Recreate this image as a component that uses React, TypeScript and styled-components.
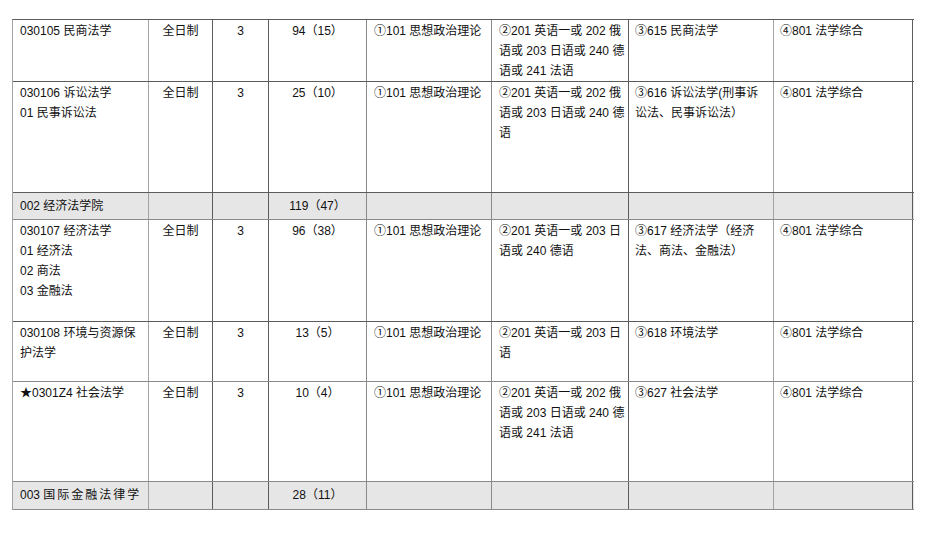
import React from "react";
import styled, { createGlobalStyle } from "styled-components";

const Global = createGlobalStyle`
  html, body { margin: 0; padding: 0; background: #ffffff; }
  body { font-family: "Liberation Sans", "Noto Sans CJK SC", sans-serif; }
`;

const DARK = "#5c5c5c";
const LIGHT = "#a3a3a3";

const COLS = [136, 64, 56, 98, 125, 137, 145, 139];
const COL_BORDER = [LIGHT, DARK, DARK, "#8a8a8a", "#8a8a8a", DARK, LIGHT, DARK];
const COL_ALIGN: ("left" | "center")[] = ["left", "center", "center", "center", "left", "left", "left", "left"];
const COL_PAD = [7, 0, 0, 0, 7, 7, 6, 6];

const Page = styled.div`
  padding: 19px 0 0 12px;
  width: 926px;
  height: 533px;
  box-sizing: border-box;
`;

const Table = styled.div`
  display: flex;
  flex-direction: column;
  width: 901px;
  border-left: 1px solid ${LIGHT};
  border-top: 1px solid ${DARK};
  font-size: 12px;
  line-height: 20px;
  color: #111;
`;

const Row = styled.div<{ $h: number; $gray?: boolean; $line: string }>`
  display: grid;
  grid-template-columns: ${COLS.map((c) => `${c}px`).join(" ")};
  height: ${(p) => p.$h}px;
  background: ${(p) => (p.$gray ? "#e6e6e6" : "#ffffff")};
  border-bottom: 1px solid ${(p) => p.$line};
  box-sizing: border-box;
`;

const Cell = styled.div<{ $border: string; $align: "left" | "center"; $pad: number; $top: number }>`
  box-sizing: border-box;
  border-right: 1px solid ${(p) => p.$border};
  text-align: ${(p) => p.$align};
  padding: ${(p) => p.$top}px 0 0 ${(p) => p.$pad}px;
  overflow: hidden;
`;

const Line = styled.div`
  white-space: nowrap;
`;

const Spaced = styled.span`
  letter-spacing: 2px;
`;

type Content = React.ReactNode[];

interface RowData {
  h: number;
  gray?: boolean;
  line: string;
  cells: Content[];
}

const rows: RowData[] = [
  {
    h: 62,
    line: DARK,
    cells: [
      ["030105 民商法学"],
      ["全日制"],
      ["3"],
      ["94（15）"],
      ["①101 思想政治理论"],
      ["②201 英语一或 202 俄", "语或 203 日语或 240 德", "语或 241 法语"],
      ["③615 民商法学"],
      ["④801 法学综合"],
    ],
  },
  {
    h: 111,
    line: DARK,
    cells: [
      ["030106 诉讼法学", "01 民事诉讼法"],
      ["全日制"],
      ["3"],
      ["25（10）"],
      ["①101 思想政治理论"],
      ["②201 英语一或 202 俄", "语或 203 日语或 240 德", "语"],
      ["③616 诉讼法学(刑事诉", "讼法、民事诉讼法）"],
      ["④801 法学综合"],
    ],
  },
  {
    h: 27,
    gray: true,
    line: "#8a8a8a",
    cells: [["002 经济法学院"], [], [], ["119（47）"], [], [], [], []],
  },
  {
    h: 102,
    line: DARK,
    cells: [
      ["030107 经济法学", "01 经济法", "02 商法", "03 金融法"],
      ["全日制"],
      ["3"],
      ["96（38）"],
      ["①101 思想政治理论"],
      ["②201 英语一或 203 日", "语或 240 德语"],
      ["③617 经济法学（经济", "法、商法、金融法）"],
      ["④801 法学综合"],
    ],
  },
  {
    h: 60,
    line: "#8a8a8a",
    cells: [
      ["030108 环境与资源保", "护法学"],
      ["全日制"],
      ["3"],
      ["13（5）"],
      ["①101 思想政治理论"],
      ["②201 英语一或 203 日", "语"],
      ["③618 环境法学"],
      ["④801 法学综合"],
    ],
  },
  {
    h: 100,
    line: "#8a8a8a",
    cells: [
      ["★0301Z4 社会法学"],
      ["全日制"],
      ["3"],
      ["10（4）"],
      ["①101 思想政治理论"],
      ["②201 英语一或 202 俄", "语或 203 日语或 240 德", "语或 241 法语"],
      ["③627 社会法学"],
      ["④801 法学综合"],
    ],
  },
  {
    h: 28,
    gray: true,
    line: "#8a8a8a",
    cells: [
      [
        <>
          003 <Spaced>国际金融法律学</Spaced>
        </>,
      ],
      [],
      [],
      ["28（11）"],
      [],
      [],
      [],
      [],
    ],
  },
];

export default function App() {
  return (
    <Page>
      <Global />
      <Table>
        {rows.map((r, ri) => (
          <Row key={ri} $h={r.h} $gray={r.gray} $line={r.line}>
            {r.cells.map((c, ci) => (
              <Cell
                key={ci}
                $border={COL_BORDER[ci]}
                $align={COL_ALIGN[ci]}
                $pad={COL_PAD[ci]}
                $top={r.gray ? 3 : 1}
              >
                {c.map((l, li) => (
                  <Line key={li}>{l}</Line>
                ))}
              </Cell>
            ))}
          </Row>
        ))}
      </Table>
    </Page>
  );
}
